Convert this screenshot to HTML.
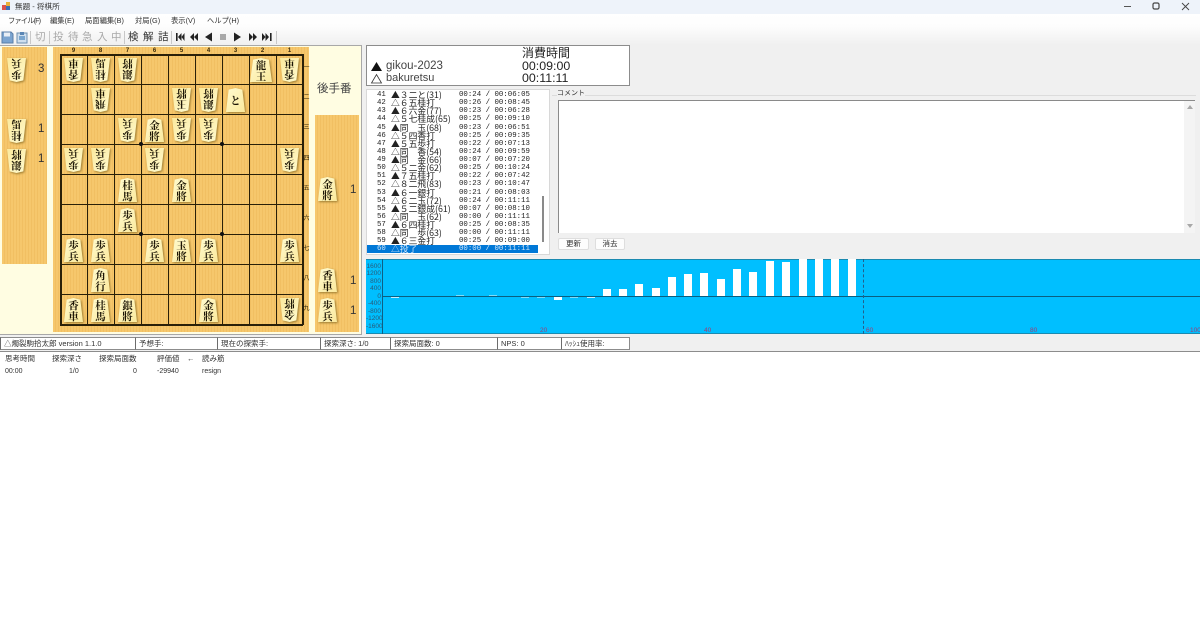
<!DOCTYPE html>
<html lang="ja"><head><meta charset="utf-8"><title>無題 - 将棋所</title>
<style>
*{box-sizing:border-box}
html,body{margin:0;padding:0}
body{width:1200px;height:631px;position:relative;overflow:hidden;background:#f0f0f0;font-family:"Liberation Sans","Noto Sans CJK JP",sans-serif;color:#222}
.a{position:absolute;white-space:nowrap}
#bar{left:0;top:14px;width:1200px;height:31px;background:linear-gradient(#fff 0,#fdfdfd 40%,#f0f0f0 100%)}
#title{left:0;top:0;width:1200px;height:14px;background:#eef3fa}
.m{font-size:7.3px;line-height:10px;top:16px;color:#333}
.tk{font-size:10.5px;line-height:12px;top:31px;font-family:"Noto Sans CJK JP",sans-serif}
.g{color:#a8a8a8}.d{color:#333}
.sep{top:31px;width:1px;height:13px;background:#c8c8c8}
.wood{background-color:#f6c76c;background-image:repeating-linear-gradient(90deg,#f6c76c 0 2px,#f1bf62 2px 3px)}
.ln{background:#2a2008}
.fn{font-size:6px;line-height:6px;top:48px;width:27px;text-align:center;font-weight:bold;color:#3a2a0a}
.rn{font-size:6px;line-height:6px;left:303px;width:7px;text-align:center;color:#2a2008;font-family:"Noto Sans CJK JP",sans-serif}
.p{position:absolute;width:19px;height:24px;margin:4px 0 0 4px;filter:drop-shadow(1px 1px 1px #9a7a30);font:700 10.5px/10.5px "Noto Serif CJK JP","Noto Serif CJK SC",serif;color:#1c1505;text-align:center;padding-top:3px}
.p::before{content:"";position:absolute;z-index:-1;left:0;top:0;width:100%;height:100%;background:linear-gradient(135deg,#fffbd0,#fbe99c);clip-path:polygon(50% 0,86% 7%,100% 100%,0 100%,14% 7%)}
.p span{position:relative;display:block}
.r{transform:rotate(180deg);filter:drop-shadow(-1px -1px 1px #9a7a30)}
.n{font-size:11.5px;line-height:12px;color:#333}
.cnt{font-family:"Liberation Sans",sans-serif}
.t1{font-size:12px;line-height:13px;color:#222}
.mv{left:367px;width:171px;height:8.1px;font:7.4px/8px "Liberation Mono",monospace;color:#222;margin-top:1px}
.mv span{position:absolute;top:0}
.mv .no{left:10px}
.mv .k{left:24px;font:8.8px/8px "Noto Sans CJK JP",sans-serif}
.mv .tm{left:92px}
.yl{font-size:6.5px;line-height:7px;left:366px;width:15px;text-align:right;color:#2a5a78}
.xl{font-size:6.5px;line-height:7px;top:327px;color:#a03a70}
.bb{width:8px;background:#fff}
.st{top:337px;height:13px;background:#fff;border:1px solid #8c8c8c;border-left:1px solid #6c6c6c;font-size:7.5px;line-height:11px;padding-left:3px;color:#333}
.h{font-size:7.5px;line-height:9px;top:354px;color:#333}
.c{font-size:7px;line-height:9px;top:367px;color:#333}
.btn{top:238px;height:12px;background:#fdfdfd;border:1px solid #dedede;border-radius:2px;font-size:7.5px;line-height:10px;text-align:center;color:#333}
</style></head><body>
<div id="title" class="a"></div>
<div id="bar" class="a"></div>
<svg class="a" style="left:2px;top:2px" width="9" height="9"><rect x="0" y="3" width="5" height="5" fill="#d9534f"/><rect x="4" y="0" width="4" height="4" fill="#e8b13a"/><rect x="4" y="4" width="4" height="4" fill="#3b6fb5"/></svg>
<div class="a" style="left:15px;top:2px;font-size:7.6px;line-height:10px;color:#333">無題 - 将棋所</div>
<div class="a m" style="left:8px;letter-spacing:-.9px">ファイル(F)</div>
<div class="a m" style="left:50px">編集(E)</div>
<div class="a m" style="left:85px">局面編集(B)</div>
<div class="a m" style="left:135px">対局(G)</div>
<div class="a m" style="left:171px">表示(V)</div>
<div class="a m" style="left:207px">ヘルプ(H)</div>

<svg class="a" style="left:0;top:30px" width="300" height="14">
<path d="M2 2h9l2 2v9H2z" fill="#7ba4d0" stroke="#5a7ea8"/><rect x="4" y="2.5" width="6" height="4" fill="#e8eef5"/>
<path d="M17 3h10v10H17z" fill="#cfdfee" stroke="#6d8fb0"/><path d="M20 2h4v3h-4z" fill="#5a86b5"/><rect x="19" y="6" width="6" height="4" fill="#7aa6cf"/>
<g fill="#222">
<path d="M176 3h1.6v8H176zM184.5 3v8l-3-4zM181.5 3v8l-3.5-4z"/>
<path d="M190 7l4-4v8zM194 7l4-4v8z"/>
<path d="M205 7l7-4.500v9z"/>
<rect x="220" y="4" width="6" height="6" fill="#a8a8a8"/>
<path d="M234 2.500l7 4.500-7 4.500z"/>
<path d="M249 3l4 4-4 4zM253 3l4 4-4 4z"/>
<path d="M262 3l3.500 4-3.500 4zM265.500 3l3.500 4-3.500 4zM270 3h1.600v8H270z"/>
</g></svg>
<div class="a sep" style="left:30px"></div>
<div class="a tk g" style="left:35px">切</div>
<div class="a sep" style="left:49px"></div>
<div class="a tk g" style="left:53px">投</div>
<div class="a tk g" style="left:68px">待</div>
<div class="a tk g" style="left:82px">急</div>
<div class="a tk g" style="left:97px">入</div>
<div class="a tk g" style="left:111px">中</div>
<div class="a sep" style="left:124px"></div>
<div class="a tk d" style="left:128px">検</div>
<div class="a tk d" style="left:143px">解</div>
<div class="a tk d" style="left:158px">詰</div>
<div class="a sep" style="left:171px"></div>
<div class="a sep" style="left:276px"></div>

<!-- shogi area -->
<div class="a" style="left:0;top:45px;width:362px;height:290px;background:#fffde2;border-top:1px solid #a8a8a8;border-right:1px solid #a8a8a8;border-bottom:1px solid #a8a8a8"></div>
<div class="a wood" style="left:2px;top:47px;width:45px;height:217px"></div>
<div class="a wood" style="left:53px;top:47px;width:256px;height:285px"></div>
<div class="a wood" style="left:315px;top:115px;width:44px;height:217px"></div>

<div class="a" style="left:60px;top:54px;width:243px;height:271px">
<div class="a ln" style="left:0;top:0;width:1.500px;height:271px"></div>
<div class="a ln" style="left:27px;top:0;width:1.300px;height:271px"></div>
<div class="a ln" style="left:54px;top:0;width:1.300px;height:271px"></div>
<div class="a ln" style="left:81px;top:0;width:1.300px;height:271px"></div>
<div class="a ln" style="left:108px;top:0;width:1.300px;height:271px"></div>
<div class="a ln" style="left:135px;top:0;width:1.300px;height:271px"></div>
<div class="a ln" style="left:162px;top:0;width:1.300px;height:271px"></div>
<div class="a ln" style="left:189px;top:0;width:1.300px;height:271px"></div>
<div class="a ln" style="left:216px;top:0;width:1.300px;height:271px"></div>
<div class="a ln" style="left:242px;top:0;width:1.500px;height:271px"></div>
<div class="a ln" style="left:0;top:0;width:243px;height:1.500px"></div>
<div class="a ln" style="left:0;top:30px;width:243px;height:1.300px"></div>
<div class="a ln" style="left:0;top:60px;width:243px;height:1.300px"></div>
<div class="a ln" style="left:0;top:90px;width:243px;height:1.300px"></div>
<div class="a ln" style="left:0;top:120px;width:243px;height:1.300px"></div>
<div class="a ln" style="left:0;top:150px;width:243px;height:1.300px"></div>
<div class="a ln" style="left:0;top:180px;width:243px;height:1.300px"></div>
<div class="a ln" style="left:0;top:210px;width:243px;height:1.300px"></div>
<div class="a ln" style="left:0;top:240px;width:243px;height:1.300px"></div>
<div class="a ln" style="left:0;top:270px;width:243px;height:1.500px"></div>
<div class="a" style="left:79px;top:88px;width:4px;height:4px;border-radius:2px;background:#111"></div>
<div class="a" style="left:160px;top:88px;width:4px;height:4px;border-radius:2px;background:#111"></div>
<div class="a" style="left:79px;top:178px;width:4px;height:4px;border-radius:2px;background:#111"></div>
<div class="a" style="left:160px;top:178px;width:4px;height:4px;border-radius:2px;background:#111"></div>
</div>

<div class="a fn" style="left:60px">9</div><div class="a fn" style="left:87px">8</div><div class="a fn" style="left:114px">7</div><div class="a fn" style="left:141px">6</div><div class="a fn" style="left:168px">5</div><div class="a fn" style="left:195px">4</div><div class="a fn" style="left:222px">3</div><div class="a fn" style="left:249px">2</div><div class="a fn" style="left:276px">1</div>
<div class="a rn" style="top:64px">一</div><div class="a rn" style="top:94px">二</div><div class="a rn" style="top:124px">三</div><div class="a rn" style="top:155px">四</div><div class="a rn" style="top:185px">五</div><div class="a rn" style="top:215px">六</div><div class="a rn" style="top:245px">七</div><div class="a rn" style="top:275px">八</div><div class="a rn" style="top:305px">九</div>

<!-- pieces -->
<div class="p r" style="left:60px;top:54px"><span>香<br>車</span></div>
<div class="p r" style="left:87px;top:54px"><span>桂<br>馬</span></div>
<div class="p r" style="left:114px;top:54px"><span>銀<br>將</span></div>
<div class="p" style="left:246px;top:54px;width:22px"><span>龍<br>王</span></div>
<div class="p r" style="left:276px;top:54px"><span>香<br>車</span></div>
<div class="p r" style="left:87px;top:84px"><span>飛<br>車</span></div>
<div class="p r" style="left:168px;top:84px"><span>玉<br>將</span></div>
<div class="p r" style="left:195px;top:84px"><span>銀<br>將</span></div>
<div class="p" style="left:222px;top:84px"><span style="padding-top:5px">と</span></div>
<div class="p r" style="left:114px;top:114px"><span>歩<br>兵</span></div>
<div class="p" style="left:141px;top:114px"><span>金<br>將</span></div>
<div class="p r" style="left:168px;top:114px"><span>歩<br>兵</span></div>
<div class="p r" style="left:195px;top:114px"><span>歩<br>兵</span></div>
<div class="p r" style="left:60px;top:144px"><span>歩<br>兵</span></div>
<div class="p r" style="left:87px;top:144px"><span>歩<br>兵</span></div>
<div class="p r" style="left:141px;top:144px"><span>歩<br>兵</span></div>
<div class="p r" style="left:276px;top:144px"><span>歩<br>兵</span></div>
<div class="p" style="left:114px;top:174px"><span>桂<br>馬</span></div>
<div class="p" style="left:168px;top:174px"><span>金<br>將</span></div>
<div class="p" style="left:114px;top:204px"><span>歩<br>兵</span></div>
<div class="p" style="left:60px;top:234px"><span>歩<br>兵</span></div>
<div class="p" style="left:87px;top:234px"><span>歩<br>兵</span></div>
<div class="p" style="left:141px;top:234px"><span>歩<br>兵</span></div>
<div class="p" style="left:168px;top:234px"><span>玉<br>將</span></div>
<div class="p" style="left:195px;top:234px"><span>歩<br>兵</span></div>
<div class="p" style="left:276px;top:234px"><span>歩<br>兵</span></div>
<div class="p" style="left:87px;top:264px"><span>角<br>行</span></div>
<div class="p" style="left:60px;top:294px"><span>香<br>車</span></div>
<div class="p" style="left:87px;top:294px"><span>桂<br>馬</span></div>
<div class="p" style="left:114px;top:294px"><span>銀<br>將</span></div>
<div class="p" style="left:195px;top:294px"><span>金<br>將</span></div>
<div class="p r" style="left:276px;top:294px"><span>金<br>將</span></div>
<!-- hands -->
<div class="p r" style="left:3px;top:54px"><span>歩<br>兵</span></div>
<div class="p r" style="left:3px;top:115px"><span>桂<br>馬</span></div>
<div class="p r" style="left:3px;top:145px"><span>銀<br>將</span></div>
<div class="p" style="left:314px;top:173px"><span>金<br>將</span></div>
<div class="p" style="left:314px;top:264px"><span>香<br>車</span></div>
<div class="p" style="left:314px;top:294px"><span>歩<br>兵</span></div>
<div class="a n cnt" style="left:38px;top:63px">3</div>
<div class="a n cnt" style="left:38px;top:123px">1</div>
<div class="a n cnt" style="left:38px;top:153px">1</div>
<div class="a n cnt" style="left:350px;top:184px">1</div>
<div class="a n cnt" style="left:350px;top:275px">1</div>
<div class="a n cnt" style="left:350px;top:305px">1</div>
<div class="a" style="left:317px;top:82px;font-size:11.500px;line-height:14px;color:#444">後手番</div>

<!-- time panel -->
<div class="a" style="left:366px;top:45px;width:264px;height:41px;background:#fff;border:1px solid #8c8c8c"></div>
<div class="a t1" style="left:522px;top:47px">消費時間</div>
<svg class="a" style="left:370px;top:60px" width="13" height="26"><path d="M1 11L6.500 2 12 11z" fill="#111"/><path d="M1.500 23l5-8.500 5 8.500z" fill="#fff" stroke="#333" stroke-width=".8"/></svg>
<div class="a t1" style="left:386px;top:60px;font-size:11.500px;color:#444">gikou-2023</div>
<div class="a t1" style="left:522px;top:60px;font-size:12.400px">00:09:00</div>
<div class="a t1" style="left:386px;top:72px;font-size:11px;color:#444">bakuretsu</div>
<div class="a t1" style="left:522px;top:72px;font-size:12.400px">00:11:11</div>

<!-- moves -->
<div class="a" style="left:366px;top:89px;width:184px;height:166px;background:#fff;border:1px solid #d8d8d8"></div>
<div class="a" style="left:542px;top:196px;width:2px;height:46px;background:#8a8a8a"></div>
<div class="a" style="left:367px;top:245px;width:171px;height:8px;background:#0078d7"></div>
<div class="a mv" style="top:90px"><span class="no">41</span><span class="k">▲３二と(31)</span><span class="tm">00:24 / 00:06:05</span></div>
<div class="a mv" style="top:98px"><span class="no">42</span><span class="k">△６五桂打</span><span class="tm">00:26 / 00:08:45</span></div>
<div class="a mv" style="top:106px"><span class="no">43</span><span class="k">▲６六金(77)</span><span class="tm">00:23 / 00:06:28</span></div>
<div class="a mv" style="top:114px"><span class="no">44</span><span class="k">△５七桂成(65)</span><span class="tm">00:25 / 00:09:10</span></div>
<div class="a mv" style="top:122.500px"><span class="no">45</span><span class="k">▲同　玉(68)</span><span class="tm">00:23 / 00:06:51</span></div>
<div class="a mv" style="top:130.500px"><span class="no">46</span><span class="k">△５四香打</span><span class="tm">00:25 / 00:09:35</span></div>
<div class="a mv" style="top:138.500px"><span class="no">47</span><span class="k">▲５五歩打</span><span class="tm">00:22 / 00:07:13</span></div>
<div class="a mv" style="top:146.700px"><span class="no">48</span><span class="k">△同　香(54)</span><span class="tm">00:24 / 00:09:59</span></div>
<div class="a mv" style="top:155px"><span class="no">49</span><span class="k">▲同　金(66)</span><span class="tm">00:07 / 00:07:20</span></div>
<div class="a mv" style="top:163px"><span class="no">50</span><span class="k">△５二金(62)</span><span class="tm">00:25 / 00:10:24</span></div>
<div class="a mv" style="top:171px"><span class="no">51</span><span class="k">▲７五桂打</span><span class="tm">00:22 / 00:07:42</span></div>
<div class="a mv" style="top:179px"><span class="no">52</span><span class="k">△８二飛(83)</span><span class="tm">00:23 / 00:10:47</span></div>
<div class="a mv" style="top:187.500px"><span class="no">53</span><span class="k">▲６一銀打</span><span class="tm">00:21 / 00:08:03</span></div>
<div class="a mv" style="top:195.500px"><span class="no">54</span><span class="k">△６二玉(72)</span><span class="tm">00:24 / 00:11:11</span></div>
<div class="a mv" style="top:203.500px"><span class="no">55</span><span class="k">▲５二銀成(61)</span><span class="tm">00:07 / 00:08:10</span></div>
<div class="a mv" style="top:211.700px"><span class="no">56</span><span class="k">△同　玉(62)</span><span class="tm">00:00 / 00:11:11</span></div>
<div class="a mv" style="top:220px"><span class="no">57</span><span class="k">▲６四桂打</span><span class="tm">00:25 / 00:08:35</span></div>
<div class="a mv" style="top:228px"><span class="no">58</span><span class="k">△同　歩(63)</span><span class="tm">00:00 / 00:11:11</span></div>
<div class="a mv" style="top:236px"><span class="no">59</span><span class="k">▲６三金打</span><span class="tm">00:25 / 00:09:00</span></div>
<div class="a mv" style="top:244px;color:#cfe6fa"><span class="no">60</span><span class="k">△投了</span><span class="tm">00:00 / 00:11:11</span></div>

<!-- comment -->
<div class="a" style="left:552px;top:95px;width:644px;height:1px;background:#dcdcdc"></div>
<div class="a" style="left:557px;top:89px;font-size:7px;line-height:9px;background:#f0f0f0;color:#333">コメント</div>
<div class="a" style="left:558px;top:100px;width:637px;height:133px;background:#fff;border:1px solid #8a8a8a;border-right:none;border-bottom:none"></div>
<div class="a" style="left:1184px;top:101px;width:11px;height:132px;background:#f4f4f4"></div>
<svg class="a" style="left:1185px;top:103px" width="10" height="128"><path d="M2 6l3-4 3 4z" fill="#a8a8a8"/><path d="M2 121l3 4 3-4z" fill="#a8a8a8"/></svg>
<div class="a btn" style="left:558px;width:31px">更新</div>
<div class="a btn" style="left:595px;width:30px">消去</div>

<!-- chart -->
<div class="a" style="left:366px;top:259px;width:834px;height:75px;background:#00bfff;border-top:1px solid #1a8ab0;border-bottom:1px solid #1a8ab0"></div>
<div class="a" style="left:382px;top:259px;width:1px;height:75px;background:#0d5f85"></div>
<div class="a" style="left:382px;top:296px;width:818px;height:1px;background:#0a5f80"></div>
<div class="a" style="left:863px;top:259px;width:0;height:75px;border-left:1px dashed #245f8a"></div>
<div class="a yl" style="top:263px">1600</div>
<div class="a yl" style="top:270px">1200</div>
<div class="a yl" style="top:278px">800</div>
<div class="a yl" style="top:285px">400</div>
<div class="a yl" style="top:293px">0</div>
<div class="a yl" style="top:300px">-400</div>
<div class="a yl" style="top:308px">-800</div>
<div class="a yl" style="top:315px">-1200</div>
<div class="a yl" style="top:323px">-1600</div>
<div class="a xl" style="left:540px">20</div>
<div class="a xl" style="left:704px">40</div>
<div class="a xl" style="left:866px">60</div>
<div class="a xl" style="left:1030px">80</div>
<div class="a xl" style="left:1190px">100</div>
<div class="a bb" style="left:391px;top:297px;height:1px;background:#c8ecfa"></div>
<div class="a bb" style="left:456px;top:295px;height:1px;background:#80dcf8"></div>
<div class="a bb" style="left:489px;top:295px;height:1px;background:#80dcf8"></div>
<div class="a bb" style="left:521px;top:297px;height:1px;background:#80dcf8"></div>
<div class="a bb" style="left:537px;top:297px;height:1px;background:#80dcf8"></div>
<div class="a bb" style="left:554px;top:297px;height:3px"></div>
<div class="a bb" style="left:570px;top:297px;height:1px;background:#80dcf8"></div>
<div class="a bb" style="left:587px;top:297px;height:1px;background:#c8ecfa"></div>
<div class="a bb" style="left:603px;top:289px;height:7px"></div>
<div class="a bb" style="left:619px;top:289px;height:7px"></div>
<div class="a bb" style="left:635px;top:284px;height:12px"></div>
<div class="a bb" style="left:652px;top:288px;height:8px"></div>
<div class="a bb" style="left:668px;top:277px;height:19px"></div>
<div class="a bb" style="left:684px;top:274px;height:22px"></div>
<div class="a bb" style="left:700px;top:273px;height:23px"></div>
<div class="a bb" style="left:717px;top:279px;height:17px"></div>
<div class="a bb" style="left:733px;top:269px;height:27px"></div>
<div class="a bb" style="left:749px;top:272px;height:24px"></div>
<div class="a bb" style="left:766px;top:261px;height:35px"></div>
<div class="a bb" style="left:782px;top:262px;height:34px"></div>
<div class="a bb" style="left:799px;top:259px;height:37px"></div>
<div class="a bb" style="left:815px;top:259px;height:37px"></div>
<div class="a bb" style="left:831px;top:259px;height:37px"></div>
<div class="a bb" style="left:848px;top:259px;height:37px"></div>

<!-- status -->
<div class="a st" style="left:0;width:136px">△燭裂駒拾太郎 version 1.1.0</div>
<div class="a st" style="left:135px;width:83px">予想手:</div>
<div class="a st" style="left:217px;width:104px">現在の探索手:</div>
<div class="a st" style="left:320px;width:71px">探索深さ: 1/0</div>
<div class="a st" style="left:390px;width:108px">探索局面数: 0</div>
<div class="a st" style="left:497px;width:65px">NPS: 0</div>
<div class="a st" style="left:561px;width:69px">ﾊｯｼｭ使用率:</div>

<!-- engine -->
<div class="a" style="left:0;top:351px;width:1200px;height:280px;background:#fff;border-top:1px solid #8c8c8c"></div>
<div class="a h" style="left:5px">思考時間</div>
<div class="a h" style="left:52px">探索深さ</div>
<div class="a h" style="left:99px">探索局面数</div>
<div class="a h" style="left:157px">評価値</div>
<div class="a h" style="left:187px">←</div>
<div class="a h" style="left:202px">読み筋</div>
<div class="a c" style="left:5px">00:00</div>
<div class="a c" style="left:69px">1/0</div>
<div class="a c" style="left:133px">0</div>
<div class="a c" style="left:157px">-29940</div>
<div class="a c" style="left:202px">resign</div>

<!-- window buttons -->
<svg class="a" style="left:1120px;top:0" width="80" height="14"><path d="M4 6.500h7" stroke="#555" stroke-width="1"/><rect x="33" y="3" width="6" height="6" rx="1.500" fill="none" stroke="#444" stroke-width="1.200"/><path d="M62 3l7 7M69 3l-7 7" stroke="#444" stroke-width=".9"/></svg>
</body></html>
